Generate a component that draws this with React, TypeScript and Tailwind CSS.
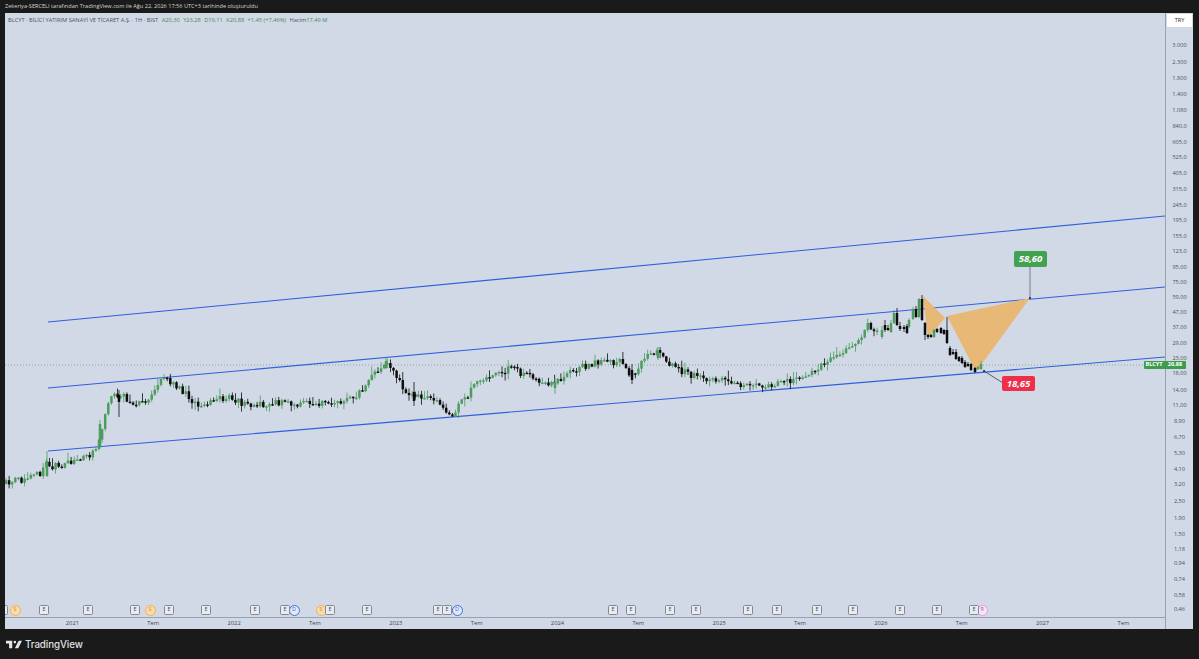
const priceTicks: [string, number][] = [
  ["3.000", 45], ["2.300", 62], ["1.800", 78], ["1.400", 94], ["1.080", 110], ["840,0", 126],
  ["605,0", 142], ["525,0", 157], ["405,0", 173], ["315,0", 189], ["245,0", 205], ["195,0", 220],
  ["155,0", 236], ["123,0", 251], ["95,00", 267], ["75,00", 282], ["59,00", 297], ["47,00", 312],
  ["37,00", 327], ["29,00", 343], ["23,00", 358], ["18,00", 373], ["14,00", 390], ["11,00", 405],
  ["8,90", 421], ["6,70", 437], ["5,30", 453], ["4,10", 469], ["3,20", 484], ["2,50", 501],
  ["1,90", 518], ["1,50", 534], ["1,18", 549], ["0,94", 563], ["0,74", 579], ["0,58", 595], ["0,46", 609],
];

const timeTicks = ["2021", "Tem", "2022", "Tem", "2023", "Tem", "2024", "Tem", "2025", "Tem", "2026", "Tem", "2027", "Tem"];

// x, close y in page pixels
const path: [number, number][] = [
  [5, 484], [20, 480], [35, 476], [42, 473], [45, 461], [50, 467], [65, 464], [80, 460], [92, 456], [97, 443],
  [103, 425], [108, 405], [112, 397], [118, 394], [130, 401], [145, 405], [155, 386], [165, 380], [180, 388],
  [195, 404], [215, 400], [230, 398], [245, 405], [265, 404], [285, 403], [310, 404], [335, 403], [355, 398],
  [370, 380], [385, 361], [395, 372], [405, 390], [420, 397], [435, 402], [452, 414], [460, 405], [470, 392],
  [480, 378], [495, 375], [510, 368], [525, 375], [545, 385], [560, 378], [580, 368], [595, 362], [620, 362],
  [630, 378], [645, 358], [658, 352], [670, 365], [690, 375], [710, 380], [730, 382], [750, 388], [775, 383],
  [800, 378], [820, 365], [840, 355], [860, 340], [868, 325], [880, 334],
];

// last stretch read off the picture: x, open, close, high, low
const tail: [number, number, number, number, number][] = [
  [882, 337, 330, 326, 339], [885, 325, 330, 320, 332], [888, 328, 330, 325, 331], [891, 332, 323, 320, 333],
  [894, 323, 313, 310, 324], [897, 313, 325, 308, 326], [900, 326, 329, 322, 331], [904, 327, 329, 325, 332],
  [907, 326, 333, 324, 334], [909, 327, 320, 318, 328], [913, 319, 309, 307, 320], [916, 309, 317, 306, 318],
  [919, 317, 299, 298, 318], [922, 299, 320, 295, 321], [925, 323, 335, 322, 340], [928, 335, 337, 334, 339],
  [931, 335, 337, 334, 338], [934, 337, 330, 329, 338], [937, 329, 332, 328, 333], [941, 328, 333, 327, 334],
  [944, 330, 334, 329, 335], [947, 330, 343, 317, 344], [950, 348, 355, 346, 356], [953, 352, 354, 349, 355],
  [956, 352, 359, 349, 360], [959, 357, 361, 356, 362], [962, 358, 363, 356, 364], [965, 362, 367, 360, 368],
  [968, 364, 366, 362, 367], [971, 364, 370, 363, 371], [975, 368, 372, 367, 373], [978, 369, 367, 366, 370],
  [981, 369, 364, 361, 370],
];

// long wicks and big bars that the smooth path leaves out
const spikes: [number, number, number, number, number][] = [
  [47, 476, 461, 451, 477], [100, 446, 424, 420, 448], [119, 395, 402, 390, 417], [386, 368, 361, 357, 369],
  [414, 392, 401, 382, 406], [658, 358, 352, 347, 360], [632, 370, 380, 364, 384], [555, 388, 382, 378, 394],
];

function buildCandles() {
  let seed = 17;
  const rnd = () => {
    seed = (seed * 16807) % 2147483647;
    return seed / 2147483647;
  };
  const at = (x: number) => {
    for (let i = 1; i < path.length; i++) {
      if (x <= path[i][0]) {
        const [x0, y0] = path[i - 1];
        const [x1, y1] = path[i];
        return y0 + ((y1 - y0) * (x - x0)) / (x1 - x0);
      }
    }
    return path[path.length - 1][1];
  };
  const out: [number, number, number, number, number][] = [];
  let prev = at(5);
  for (let x = 6; x < 880; x += 3.1) {
    const close = at(x) + (rnd() - 0.5) * 7;
    const top = Math.min(prev, close);
    const bottom = Math.max(prev, close);
    out.push([x, prev, close, top - rnd() * rnd() * 9 - 0.5, bottom + rnd() * rnd() * 7 + 0.5]);
    prev = close;
  }
  return [...out, ...spikes, ...tail];
}

const candles = buildCandles();

type Marker = { x: number; kind: "E" | "S" | "D" | "P" };
const markers: Marker[] = [
  { x: 3, kind: "E" }, { x: 15, kind: "S" }, { x: 44, kind: "E" }, { x: 88, kind: "E" }, { x: 135, kind: "E" },
  { x: 150, kind: "S" }, { x: 169, kind: "E" }, { x: 206, kind: "E" }, { x: 255, kind: "E" }, { x: 294, kind: "D" },
  { x: 285, kind: "E" }, { x: 321, kind: "S" }, { x: 330, kind: "E" }, { x: 367, kind: "E" }, { x: 438, kind: "E" },
  { x: 447, kind: "E" }, { x: 457, kind: "D" }, { x: 613, kind: "E" }, { x: 631, kind: "E" }, { x: 670, kind: "E" },
  { x: 696, kind: "E" }, { x: 748, kind: "E" }, { x: 777, kind: "E" }, { x: 817, kind: "E" }, { x: 853, kind: "E" },
  { x: 900, kind: "E" }, { x: 937, kind: "E" }, { x: 982, kind: "P" }, { x: 974, kind: "E" },
];

function MarkerPin({ x, kind }: Marker) {
  if (kind === "E") {
    return (
      <div
        className="absolute top-[592px] flex h-[10px] w-[10px] items-center justify-center rounded-[1.5px] border border-[#85898f] bg-[#e8ebf1] text-[5.5px] leading-none text-[#4a4e57]"
        style={{ left: x - 10 }}
      >
        E
      </div>
    );
  }
  const tone =
    kind === "S"
      ? "border-[#f5b04c] bg-[#f6dcae] text-[#d98a1c]"
      : kind === "D"
        ? "border-[#3f6fe0] bg-[#e2e8f6] text-[#3f6fe0]"
        : "border-[#e79be8] bg-[#f5e6f5] text-[#b0309f]";
  return (
    <div
      className={`absolute top-[591.5px] flex h-[11px] w-[11px] items-center justify-center rounded-full border text-[5.5px] leading-none ${tone}`}
      style={{ left: x - 10.5 }}
    >
      {kind === "P" ? "9" : kind}
    </div>
  );
}

function Chart() {
  return (
    <svg viewBox="5 13 1160 604" width={1160} height={604} className="absolute inset-0 block">
      <line x1={5} y1={365} x2={1165} y2={365} stroke="#7f9c88" strokeWidth={0.8} strokeDasharray="1 2" />
      <g stroke="#2f5fdc" strokeWidth={1.1}>
        <line x1={48} y1={322} x2={1165} y2={216} />
        <line x1={48} y1={388} x2={1165} y2={287} />
        <line x1={48} y1={451} x2={1165} y2={357} />
      </g>
      <g fill="#e8b877">
        <polygon points="923,296 945,318 928,338" />
        <polygon points="947,316 1030,298 976,372" />
      </g>
      {candles.map(([x, open, close, high, low], i) => {
        const up = close < open;
        const color = up ? "#4c9c5e" : "#0d0d0d";
        const top = Math.min(open, close);
        const h = Math.max(Math.abs(open - close), 1.4);
        return (
          <g key={i} fill={color}>
            <rect x={x - 0.4} y={high} width={0.8} height={low - high} />
            <rect x={x - 1.25} y={top} width={2.5} height={h} />
          </g>
        );
      })}
      <line x1={1030} y1={267} x2={1030} y2={298} stroke="#7a7f88" strokeWidth={1} />
      <line x1={984} y1={371} x2={1003} y2={383} stroke="#555a63" strokeWidth={1} />
      <circle cx={1030} cy={298} r={1} fill="#1a1a1a" />
      <circle cx={984} cy={371} r={1} fill="#1a1a1a" />
    </svg>
  );
}

function Logo() {
  return (
    <svg viewBox="0 5 36 19" width={16} height={9} fill="#e6e6e6">
      <path d="M14 6H0v6h7v11h7V6z" />
      <circle cx={20} cy={9} r={3} />
      <path d="M28.5 6H36l-8.5 17H20l8.5-17z" />
    </svg>
  );
}

export default function App() {
  return (
    <div className="flex h-[659px] w-[1199px] flex-col overflow-hidden bg-[#1a1a1a] font-['Open_Sans',sans-serif]">
      <div className="flex h-[13px] items-center pl-[5px] text-[5.6px] leading-none text-[#d4d4d4]">
        Zekeriya-SERCELI tarafından TradingView.com ile Ağu 22, 2026 17:56 UTC+3 tarihinde oluşturuldu
      </div>

      <div className="flex h-[616px] pl-[5px] pr-[6px]">
        <div className="flex w-[1160px] flex-col bg-[#d2d9e6]">
          <div className="relative h-[604px]">
            <Chart />

            <div className="absolute left-[3px] top-[4px] flex gap-[3.4px] whitespace-nowrap text-[5.7px] leading-[7px] text-[#4a5060]">
              <span>BLCYT · BİLİCİ YATIRIM SANAYİ VE TİCARET A.Ş. · 1H · BIST</span>
              <span className="flex gap-[3.4px] text-[#3f8a52]">
                <span>A20,30</span>
                <span>Y23,28</span>
                <span>D19,11</span>
                <span>K20,88</span>
                <span>+1,45 (+7,46%)</span>
              </span>
              <span>
                Hacim<span className="text-[#3f8a52]">17,49 M</span>
              </span>
            </div>

            <div className="absolute inset-0 overflow-hidden">
              {markers.map((m, i) => (
                <MarkerPin key={i} {...m} />
              ))}
            </div>

            <div className="absolute left-[1009px] top-[238px] flex h-[16px] w-[33px] items-center justify-center rounded-[2px] bg-[#43a152] text-[9.5px] font-bold italic leading-none text-white">
              58,60
            </div>
            <div className="absolute left-[997px] top-[363px] flex h-[15px] w-[33px] items-center justify-center rounded-[2px] bg-[#ee2f4a] text-[9.5px] font-bold italic leading-none text-white">
              18,65
            </div>

            <div className="absolute left-[1139px] top-[348px] z-10 flex h-[8px] w-[42px] items-center rounded-[1px] bg-[#3f9c4f] text-[5.6px] font-bold leading-none text-white">
              <span className="w-[20px] text-center">BLCYT</span>
              <span className="flex-1 text-center">20,88</span>
            </div>
          </div>

          <div className="flex h-[12px] items-center border-t border-[#9aa1ae] pl-[27px] text-[5.8px] leading-none text-[#3f4452]">
            {timeTicks.map((t, i) => (
              <span key={i} className="w-[80.85px] shrink-0 text-center">
                {t}
              </span>
            ))}
          </div>
        </div>

        <div className="relative w-[28px] border-l border-[#9aa1ae] bg-[#d2d9e6] text-[5.6px] leading-none text-[#4a5060]">
          <div className="mx-auto mt-px flex h-[13px] w-[25px] items-center justify-center bg-white text-[5.6px] text-[#1f2430]">
            TRY
          </div>
          <div className="flex flex-col items-center">
            {priceTicks.map(([label, y], i) => (
              <div
                key={label}
                className="flex items-end justify-center"
                style={{ height: y - (i === 0 ? 27 : priceTicks[i - 1][1]), lineHeight: "6px" }}
              >
                <span className="translate-y-[3px]">{label}</span>
              </div>
            ))}
          </div>
        </div>
      </div>

      <div className="flex flex-1 items-center gap-[3px] pl-[6px] pt-[1px]">
        <Logo />
        <span className="font-['Inter',sans-serif] text-[9.8px] font-medium leading-none tracking-[-0.1px] text-[#e0e0e0]">
          TradingView
        </span>
      </div>
    </div>
  );
}
